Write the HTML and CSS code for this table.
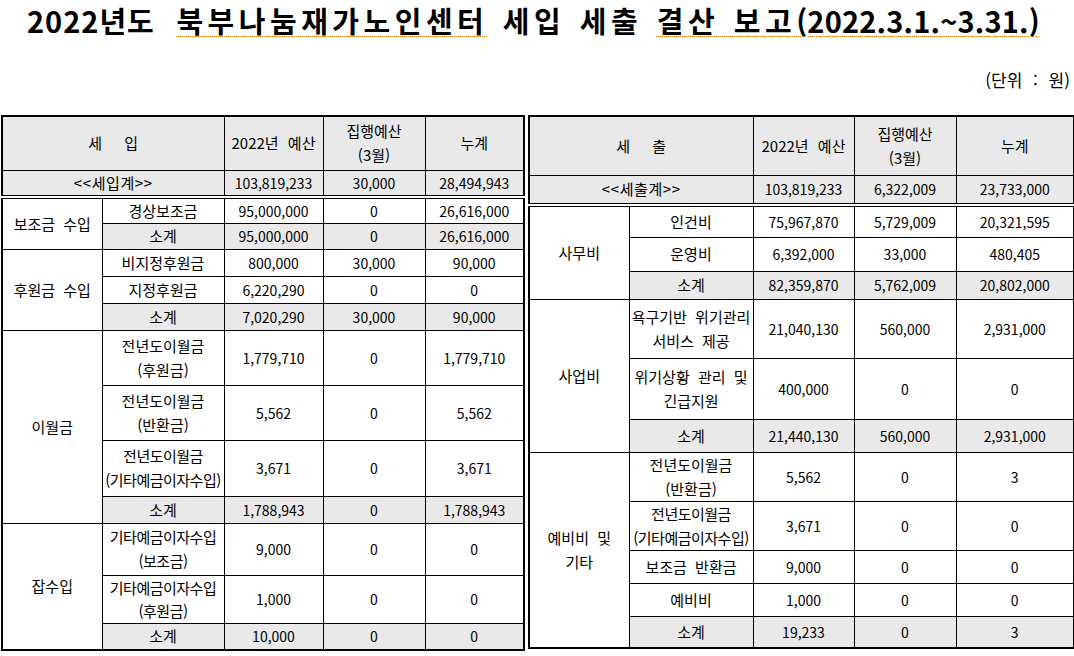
FILE: index.html
```html
<!DOCTYPE html>
<html lang="ko">
<head>
<meta charset="utf-8">
<link rel="stylesheet" href="styles.css">
</head>
<body>
<h1 class="title"><span class="lead">2022년도</span> <span class="spell">북부나눔재가노인센터</span> 세입 세출 <span class="spell">결산 보고<span class="num">(2022.3.1.~3.31.)</span></span></h1>
<div class="unit">(단위 : 원)</div>
<div class="tables">
  <table class="sheet left">
    <colgroup>
      <col class="c-cat"><col class="c-sub"><col class="c-bud"><col class="c-exe"><col class="c-cum-l">
    </colgroup>
    <tr class="r-head-l">
      <th colspan="2" class="g"><span class="spread">세 입</span></th>
      <th class="g">2022년 예산</th>
      <th class="g">집행예산<br>(3월)</th>
      <th class="g">누계</th>
    </tr>
    <tr class="r-sum-l total">
      <td colspan="2" class="g">&lt;&lt;세입계&gt;&gt;</td>
      <td class="g">103,819,233</td>
      <td class="g">30,000</td>
      <td class="g">28,494,943</td>
    </tr>
    <tr class="h26">
      <td rowspan="2">보조금 수입</td>
      <td>경상보조금</td><td>95,000,000</td><td>0</td><td>26,616,000</td>
    </tr>
    <tr class="h26">
      <td class="g">소계</td><td class="g">95,000,000</td><td class="g">0</td><td class="g">26,616,000</td>
    </tr>
    <tr class="h27">
      <td rowspan="3">후원금 수입</td>
      <td>비지정후원금</td><td>800,000</td><td>30,000</td><td>90,000</td>
    </tr>
    <tr class="h27">
      <td>지정후원금</td><td>6,220,290</td><td>0</td><td>0</td>
    </tr>
    <tr class="h27">
      <td class="g">소계</td><td class="g">7,020,290</td><td class="g">30,000</td><td class="g">90,000</td>
    </tr>
    <tr class="h55">
      <td rowspan="4">이월금</td>
      <td>전년도이월금<br>(후원금)</td><td>1,779,710</td><td>0</td><td>1,779,710</td>
    </tr>
    <tr class="h55">
      <td>전년도이월금<br>(반환금)</td><td>5,562</td><td>0</td><td>5,562</td>
    </tr>
    <tr class="h56">
      <td class="tight">전년도이월금<br>(기타예금이자수입)</td><td>3,671</td><td>0</td><td>3,671</td>
    </tr>
    <tr class="h27">
      <td class="g">소계</td><td class="g">1,788,943</td><td class="g">0</td><td class="g">1,788,943</td>
    </tr>
    <tr class="h52">
      <td rowspan="3">잡수입</td>
      <td class="tight">기타예금이자수입<br>(보조금)</td><td>9,000</td><td>0</td><td>0</td>
    </tr>
    <tr class="h48">
      <td class="tight">기타예금이자수입<br>(후원금)</td><td>1,000</td><td>0</td><td>0</td>
    </tr>
    <tr class="h27">
      <td class="g">소계</td><td class="g">10,000</td><td class="g">0</td><td class="g">0</td>
    </tr>
  </table>

  <table class="sheet right">
    <colgroup>
      <col class="c-cat"><col class="c-sub-r"><col class="c-bud-r"><col class="c-exe"><col class="c-cum-r">
    </colgroup>
    <tr class="r-head-r">
      <th colspan="2" class="g"><span class="spread">세 출</span></th>
      <th class="g">2022년 예산</th>
      <th class="g">집행예산<br>(3월)</th>
      <th class="g">누계</th>
    </tr>
    <tr class="r-sum-r total">
      <td colspan="2" class="g">&lt;&lt;세출계&gt;&gt;</td>
      <td class="g">103,819,233</td>
      <td class="g">6,322,009</td>
      <td class="g">23,733,000</td>
    </tr>
    <tr class="h32">
      <td rowspan="3">사무비</td>
      <td>인건비</td><td>75,967,870</td><td>5,729,009</td><td>20,321,595</td>
    </tr>
    <tr class="h34">
      <td>운영비</td><td>6,392,000</td><td>33,000</td><td>480,405</td>
    </tr>
    <tr class="h28">
      <td class="g">소계</td><td class="g">82,359,870</td><td class="g">5,762,009</td><td class="g">20,802,000</td>
    </tr>
    <tr class="h59">
      <td rowspan="3">사업비</td>
      <td class="fit">욕구기반 위기관리<br>서비스 제공</td><td>21,040,130</td><td>560,000</td><td>2,931,000</td>
    </tr>
    <tr class="h61">
      <td class="fit">위기상황 관리 및<br>긴급지원</td><td>400,000</td><td>0</td><td>0</td>
    </tr>
    <tr class="h33">
      <td class="g">소계</td><td class="g">21,440,130</td><td class="g">560,000</td><td class="g">2,931,000</td>
    </tr>
    <tr class="h49">
      <td rowspan="5">예비비 및<br>기타</td>
      <td>전년도이월금<br>(반환금)</td><td>5,562</td><td>0</td><td>3</td>
    </tr>
    <tr class="h49">
      <td class="tight">전년도이월금<br>(기타예금이자수입)</td><td>3,671</td><td>0</td><td>0</td>
    </tr>
    <tr class="h33">
      <td>보조금 반환금</td><td>9,000</td><td>0</td><td>0</td>
    </tr>
    <tr class="h33">
      <td>예비비</td><td>1,000</td><td>0</td><td>0</td>
    </tr>
    <tr class="h32">
      <td class="g">소계</td><td class="g">19,233</td><td class="g">0</td><td class="g">3</td>
    </tr>
  </table>
</div>
</body>
</html>
```

FILE: styles.css
```css
html, body {
  margin: 0;
  padding: 0;
  background: #fff;
}
body {
  font-family: "Noto Sans CJK KR", "Noto Sans", sans-serif;
  color: #000;
  width: 1074px;
  height: 656px;
  overflow: hidden;
}
.title {
  margin: 0;
  padding-left: 27px;
  font-size: 29px;
  font-weight: 700;
  line-height: 40px;
  height: 40px;
  letter-spacing: 4.5px;
  word-spacing: 2px;
  white-space: nowrap;
}
.title .lead {
  letter-spacing: 1px;
  margin-right: 7px;
}
.title .num {
  letter-spacing: 0.2px;
}
.spell {
  text-decoration: underline dotted #f07d10;
  text-decoration-thickness: 1px;
  text-underline-offset: 3px;
}
.unit {
  margin-top: 30px;
  text-align: right;
  padding-right: 4px;
  font-size: 17px;
  line-height: 20px;
  word-spacing: 6px;
}
.tables {
  margin-top: 25px;
  padding-left: 1px;
  display: flex;
  align-items: flex-start;
  gap: 3px;
}
.sheet {
  border-collapse: collapse;
  table-layout: fixed;
  border: 2px solid #000;
  font-size: 15px;
  line-height: 24px;
}
.sheet.left { width: 522px; }
.sheet.right { width: 545px; }
.c-cat { width: 100px; }
.c-sub { width: 122px; }
.c-bud { width: 99px; }
.c-exe { width: 102px; }
.c-cum-l { width: 99px; }
.c-sub-r { width: 124px; }
.c-bud-r { width: 101px; }
.c-cum-r { width: 118px; }

.sheet th, .sheet td {
  border: 1px solid #000;
  padding: 0;
  text-align: center;
  vertical-align: middle;
  font-weight: 400;
  white-space: nowrap;
  overflow: hidden;
  word-spacing: 4px;
}
.sheet td:nth-last-child(-n+3) {
  font-size: 14px;
  letter-spacing: 0;
}
.sheet th:nth-last-child(-n+3) {
  word-spacing: 5px;
}
.g { background: #e9e9e9; }
.tight { letter-spacing: -0.5px; word-spacing: 0; }
.fit { letter-spacing: 0; word-spacing: 3px; }
.spread { word-spacing: 18px; }
.total td { border-bottom: 4px double #000; letter-spacing: 0.6px; }

.r-head-l { height: 54px; }
.r-sum-l { height: 22px; }
.r-head-r { height: 59px; }
.r-sum-r { height: 30px; }
.h26 { height: 26px; }
.h27 { height: 27px; }
.h28 { height: 28px; }
.h32 { height: 32px; }
.h33 { height: 33px; }
.h34 { height: 34px; }
.h48 { height: 48px; }
.h48 td { line-height: 23px; }
.h49 { height: 49px; }
.h52 { height: 52px; }
.h55 { height: 55px; }
.h56 { height: 56px; }
.h59 { height: 59px; }
.h61 { height: 61px; }
```
